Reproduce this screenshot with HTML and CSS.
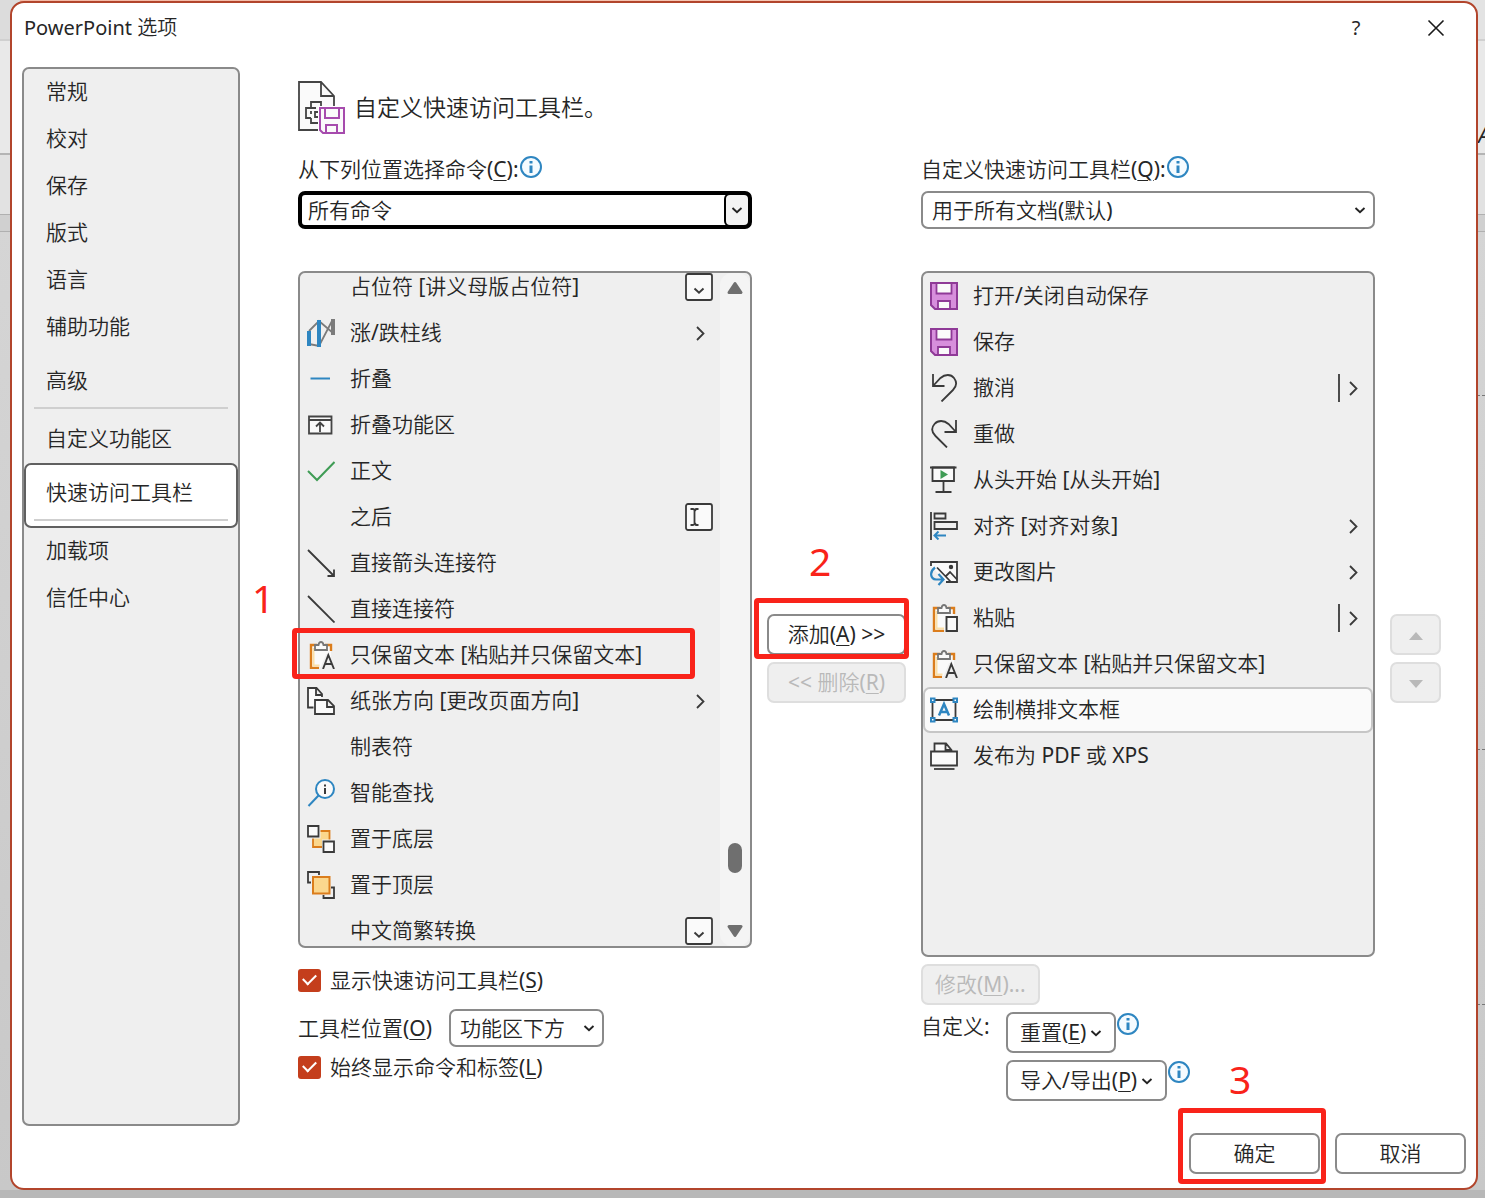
FILE: index.html
```html
<!DOCTYPE html>
<html lang="zh-CN">
<head>
    <meta charset="UTF-8">
    <meta name="viewport" content="width=device-width, initial-scale=1.0">
    <title>PowerPoint 选项</title>
    <link rel="stylesheet" href="styles.css">
</head>
<body>
    <!-- 公用图标 -->
    <svg class="hidden" xmlns="http://www.w3.org/2000/svg">
        <symbol id="i-info" viewBox="0 0 24 24">
            <circle cx="12" cy="12" r="10" fill="#f5fbff" stroke="#2e86c1" stroke-width="2"/>
            <path d="M12 10.500v7.500M12 6v2.600" stroke="#2e86c1" stroke-width="3" fill="none"/>
        </symbol>
        <symbol id="i-down" viewBox="0 0 12 12">
            <path d="M1.500 4l4.500 4.200L10.500 4" fill="none" stroke="#222" stroke-width="1.900"/>
        </symbol>
        <symbol id="i-right" viewBox="0 0 28 28">
            <path d="M12 8l6.500 6.500L12 21" fill="none" stroke="#3a3a3a" stroke-width="1.800"/>
        </symbol>
        <symbol id="i-split" viewBox="0 0 28 28">
            <path d="M12 8l6.500 6.500L12 21M1 0v28" fill="none" stroke="#3a3a3a" stroke-width="1.800"/>
        </symbol>
        <symbol id="i-drop" viewBox="0 0 28 28">
            <rect x="1" y="1" width="26" height="26" rx="2" fill="#fafafa" stroke="#3a3a3a" stroke-width="1.800"/>
            <path d="M9.500 15.500l4.500 4.300 4.500-4.300" fill="none" stroke="#3a3a3a" stroke-width="1.900"/>
        </symbol>
        <symbol id="i-save" viewBox="0 0 28 28">
            <path d="M1 1h26v26H5l-4-4z" fill="#d78fdc" stroke="#8f3a97" stroke-width="2"/>
            <path d="M6.500 1h15v10.500h-15zM8 27v-8h12v8z" fill="#fafafa" stroke="#8f3a97" stroke-width="1.800"/>
        </symbol>
        <symbol id="i-paste-text" viewBox="0 0 28 28">
            <path d="M4 4h20v22H4z" fill="#fafafa"/>
            <path d="M10 4H4v23h8M18 4h6v6" fill="none" stroke="#db7d1c" stroke-width="2.400"/>
            <path d="M6.500 7v17.500h6" fill="none" stroke="#fbe0a8" stroke-width="2"/>
            <path d="M13 28l6-15h3l6 15z" fill="#efefef"/>
            <path d="M8 9V4h3.500q.5-3 2.500-3t2.500 3H20v5z" fill="#fafafa" stroke="#777" stroke-width="1.800"/>
            <path d="M16 28l5.300-14 5.700 14M18 23h7.200" fill="none" stroke="#3a3a3a" stroke-width="1.900"/>
        </symbol>
    </svg>

    <!-- 后面的主窗口 -->
    <div class="backdrop">
        <div class="backdrop-title"></div>
        <div class="backdrop-tabs"><span>A</span></div>
        <div class="backdrop-ribbon"></div>
        <div class="backdrop-gap"></div>
        <div class="backdrop-canvas">
            <div class="guide"></div>
            <div class="guide"></div>
            <div class="guide"></div>
        </div>
    </div>

    <div class="dialog">
        <header class="titlebar">
            <h1>PowerPoint 选项</h1>
            <button type="button" class="title-button">?</button>
            <button type="button" class="title-button" aria-label="关闭">
                <svg width="18" height="18" viewBox="0 0 18 18"><path d="M1.500 1.500l15 15M16.500 1.500l-15 15" stroke="#1a1a1a" stroke-width="1.600"/></svg>
            </button>
        </header>

        <div class="dialog-body">
            <nav class="sidebar">
                <a href="#">常规</a>
                <a href="#">校对</a>
                <a href="#">保存</a>
                <a href="#">版式</a>
                <a href="#">语言</a>
                <a href="#">辅助功能</a>
                <a href="#" class="advanced">高级</a>
                <hr>
                <a href="#">自定义功能区</a>
                <div class="current">
                    <a href="#">快速访问工具栏</a>
                    <hr>
                </div>
                <a href="#">加载项</a>
                <a href="#">信任中心</a>
            </nav>

            <main class="content">
                <div class="heading">
                    <svg width="48" height="54" viewBox="0 0 48 54" fill="none">
                        <path d="M1 1h22l13 14v34H1z" fill="#fafafa"/>
                        <path d="M20 49H1V1h22l13 14v12M23 1v14h13" stroke="#444" stroke-width="1.800"/>
                        <path d="M13 27v-6h10v6M18 27H8v10h5M13 30v3M13 37v5h7M21 31h-4v5h3" stroke="#444" stroke-width="1.800"/>
                        <path d="M20 25h28v29H20z" fill="#fff"/>
                        <path d="M22 27h24v25H25l-3-3z" fill="#fafafa" stroke="#a64bad" stroke-width="2"/>
                        <path d="M27 27v10h14V27M28 52v-8h11v8" stroke="#a64bad" stroke-width="2"/>
                    </svg>
                    <h2>自定义快速访问工具栏。</h2>
                </div>

                <div class="columns">
                    <!-- 可选命令 -->
                    <section class="column">
                        <div class="label-row">
                            <label for="source">从下列位置选择命令(<u>C</u>):</label>
                            <svg class="info"><use href="#i-info"/></svg>
                        </div>
                        <div class="select focused">
                            <select id="source"><option>所有命令</option></select>
                            <span class="arrow"><svg><use href="#i-down"/></svg></span>
                        </div>
                        <div class="list source-list">
                            <ul>
                                <li><span class="icon"></span><span class="name">占位符 [讲义母版占位符]</span><svg class="icon"><use href="#i-drop"/></svg></li>
                                <li>
                                    <svg class="icon" viewBox="0 0 28 28" fill="none">
                                        <path d="M2 12L12 2l14 12M2 25l10 2L25 2" stroke="#7b7b7b" stroke-width="1.800"/>
                                        <path d="M2 12v15" stroke="#2e86c1" stroke-width="4"/>
                                        <path d="M12 1v27" stroke="#2e86c1" stroke-width="4"/>
                                        <path d="M26 0v16" stroke="#7b7b7b" stroke-width="4"/>
                                    </svg>
                                    <span class="name">涨/跌柱线</span><svg class="icon"><use href="#i-right"/></svg>
                                </li>
                                <li>
                                    <svg class="icon" viewBox="0 0 28 28"><path d="M3.500 13.500H23" stroke="#2e86c1" stroke-width="2"/></svg>
                                    <span class="name">折叠</span>
                                </li>
                                <li>
                                    <svg class="icon" viewBox="0 0 28 28" fill="none" stroke="#444" stroke-width="1.800">
                                        <path d="M2 5.500h22.500v17H2z" fill="#fafafa"/>
                                        <path d="M2 9h22.500M13 21v-9M9 15.500l4-4 4 4"/>
                                    </svg>
                                    <span class="name">折叠功能区</span>
                                </li>
                                <li>
                                    <svg class="icon" viewBox="0 0 28 28"><path d="M1 14l9 9L27.500 5" fill="none" stroke="#3f9c55" stroke-width="2"/></svg>
                                    <span class="name">正文</span>
                                </li>
                                <li>
                                    <span class="icon"></span><span class="name">之后</span>
                                    <svg class="icon" viewBox="0 0 28 28" fill="none" stroke="#3a3a3a" stroke-width="1.800">
                                        <rect x="1" y="1" width="26" height="26" rx="2" fill="#fafafa"/>
                                        <path d="M5.500 6H8q1.500 0 1.500 1.500T11 6h2.500M9.500 7v14M5.500 22H8q1.500 0 1.500-1.500T11 22h2.500"/>
                                    </svg>
                                </li>
                                <li>
                                    <svg class="icon" viewBox="0 0 28 28"><path d="M1 1l26 26M27 20.500V27h-6.500" fill="none" stroke="#3a3a3a" stroke-width="1.800"/></svg>
                                    <span class="name">直接箭头连接符</span>
                                </li>
                                <li>
                                    <svg class="icon" viewBox="0 0 28 28"><path d="M1 1l26.500 26.500" stroke="#3a3a3a" stroke-width="1.800"/></svg>
                                    <span class="name">直接连接符</span>
                                </li>
                                <li class="marked">
                                    <svg class="icon"><use href="#i-paste-text"/></svg>
                                    <span class="name">只保留文本 [粘贴并只保留文本]</span>
                                    <span class="mark mark-item"></span>
                                    <span class="step step-one">1</span>
                                </li>
                                <li>
                                    <svg class="icon" viewBox="0 0 28 28" fill="#fafafa" stroke="#3a3a3a" stroke-width="1.800">
                                        <path d="M6.500 20.500H1V1h8.500l5.500 6v3M9 1v7h6" />
                                        <path d="M8 13h13l6 6v8H8zM20 13v7h7"/>
                                    </svg>
                                    <span class="name">纸张方向 [更改页面方向]</span><svg class="icon"><use href="#i-right"/></svg>
                                </li>
                                <li><span class="icon"></span><span class="name">制表符</span></li>
                                <li>
                                    <svg class="icon" viewBox="0 0 28 28" fill="none">
                                        <circle cx="18" cy="10" r="9" fill="#fafafa" stroke="#2e86c1" stroke-width="2"/>
                                        <path d="M11.500 16.500L1.500 27" stroke="#2e86c1" stroke-width="2"/>
                                        <path d="M18 9v6M18 5.500v2" stroke="#3a3a3a" stroke-width="2"/>
                                    </svg>
                                    <span class="name">智能查找</span>
                                </li>
                                <li>
                                    <svg class="icon" viewBox="0 0 28 28" stroke-width="1.800">
                                        <path d="M6 6h16.500v16H6z" fill="#fbd78d" stroke="#db7d1c"/>
                                        <path d="M0 0h13.500v13.500H0zM15 14.500h13V28H15z" fill="#efefef"/>
                                        <path d="M1 1h10.500v10.500H1zM16.500 16.500H27V27H16.500z" fill="#fafafa" stroke="#3a3a3a"/>
                                    </svg>
                                    <span class="name">置于底层</span>
                                </li>
                                <li>
                                    <svg class="icon" viewBox="0 0 28 28" stroke-width="1.800" fill="none">
                                        <path d="M4 11.500H1V1h11v3M24 16.500h3V27H16.500v-3" stroke="#3a3a3a"/>
                                        <path d="M6 6h16.500v16.500H6z" fill="#fbd78d" stroke="#db7d1c" stroke-width="2"/>
                                    </svg>
                                    <span class="name">置于顶层</span>
                                </li>
                                <li><span class="icon"></span><span class="name">中文简繁转换</span><svg class="icon"><use href="#i-drop"/></svg></li>
                            </ul>
                            <div class="scrollbar">
                                <svg width="16" height="14" viewBox="0 0 16 14"><path d="M8 2.500l6 9H2z" fill="#6f6f6f" stroke="#6f6f6f" stroke-width="3" stroke-linejoin="round"/></svg>
                                <div class="track"><div class="thumb"></div></div>
                                <svg width="16" height="14" viewBox="0 0 16 14"><path d="M8 11.500l6-9H2z" fill="#6f6f6f" stroke="#6f6f6f" stroke-width="3" stroke-linejoin="round"/></svg>
                            </div>
                        </div>
                        <div class="source-options">
                            <label class="check"><input type="checkbox" checked><span>显示快速访问工具栏(<u>S</u>)</span></label>
                            <div class="position-row">
                                <label for="position">工具栏位置(<u>O</u>)</label>
                                <div class="select">
                                    <select id="position"><option>功能区下方</option></select>
                                    <span class="arrow"><svg><use href="#i-down"/></svg></span>
                                </div>
                            </div>
                            <label class="check"><input type="checkbox" checked><span>始终显示命令和标签(<u>L</u>)</span></label>
                        </div>
                    </section>

                    <!-- 添加 / 删除 -->
                    <div class="transfer">
                        <div class="marked">
                            <button type="button" class="button">添加(<u>A</u>) &gt;&gt;</button>
                            <span class="mark mark-add"></span>
                            <span class="step step-two">2</span>
                        </div>
                        <button type="button" class="button" disabled>&lt;&lt; 删除(<u>R</u>)</button>
                    </div>

                    <!-- 已选命令 -->
                    <section class="column">
                        <div class="label-row">
                            <label for="target">自定义快速访问工具栏(<u>Q</u>):</label>
                            <svg class="info"><use href="#i-info"/></svg>
                        </div>
                        <div class="select">
                            <select id="target"><option>用于所有文档(默认)</option></select>
                            <span class="arrow"><svg><use href="#i-down"/></svg></span>
                        </div>
                        <div class="list">
                            <ul>
                                <li><svg class="icon"><use href="#i-save"/></svg><span class="name">打开/关闭自动保存</span></li>
                                <li><svg class="icon"><use href="#i-save"/></svg><span class="name">保存</span></li>
                                <li>
                                    <svg class="icon" viewBox="0 0 28 28"><path d="M3 0v12h11.500M3 12l7.500-8C15 0 21 0 24 4s3 8-1 12L11.500 27.500" fill="none" stroke="#3a3a3a" stroke-width="1.800"/></svg>
                                    <span class="name">撤消</span><svg class="icon"><use href="#i-split"/></svg>
                                </li>
                                <li>
                                    <svg class="icon" viewBox="0 0 28 28"><path d="M26 0v12H14.500M26 12l-7.500-8C14 0 8 0 4.500 4s-3 8 1 12L17 27.500" fill="none" stroke="#3a3a3a" stroke-width="1.800"/></svg>
                                    <span class="name">重做</span>
                                </li>
                                <li>
                                    <svg class="icon" viewBox="0 0 28 28" fill="none" stroke="#3a3a3a" stroke-width="1.800">
                                        <path d="M2.500 1.500h21.500V15H2.500z" fill="#fafafa"/>
                                        <path d="M0 1.500h26.500M13.500 15v11M5.500 26h16"/>
                                        <path d="M10.500 4v9l7.500-4.500z" fill="#3f9c55" stroke="none"/>
                                    </svg>
                                    <span class="name">从头开始 [从头开始]</span>
                                </li>
                                <li>
                                    <svg class="icon" viewBox="0 0 28 28" fill="none" stroke="#3a3a3a" stroke-width="1.800">
                                        <path d="M1 0v28M4.500 1.500h11v5h-11zM4.500 10H27v7H4.500z"/>
                                        <path d="M16 23.500H5M8.500 19.500l-4 4 4 4" stroke="#2e86c1" stroke-width="2"/>
                                    </svg>
                                    <span class="name">对齐 [对齐对象]</span><svg class="icon"><use href="#i-right"/></svg>
                                </li>
                                <li>
                                    <svg class="icon" viewBox="0 0 28 28" fill="none" stroke="#3a3a3a" stroke-width="1.800">
                                        <path d="M1 8V4h26v20H16" fill="#fafafa"/>
                                        <path d="M7 9.500L20.500 23.500M16 18l4-4 7 7.500"/>
                                        <circle cx="21" cy="9" r="1.300" fill="#3a3a3a"/>
                                        <path d="M5 9.500C-1 14 .5 21 6 21.500h7M8.500 16l5 5.500-5 5.500" stroke="#2e86c1" stroke-width="2.200"/>
                                    </svg>
                                    <span class="name">更改图片</span><svg class="icon"><use href="#i-right"/></svg>
                                </li>
                                <li>
                                    <svg class="icon" viewBox="0 0 28 28" fill="none">
                                        <path d="M4 4h20v22H4z" fill="#fafafa"/>
                                        <path d="M10 4H4v23h10M18 4h6v6" stroke="#db7d1c" stroke-width="2.400"/>
                                        <path d="M6.500 7v17.500H14" stroke="#fbe0a8" stroke-width="2"/>
                                        <path d="M8 9V4h3.500q.5-3 2.500-3t2.500 3H20v5z" fill="#fafafa" stroke="#777" stroke-width="1.800"/>
                                        <path d="M16.500 13H27v14H16.500z" fill="#fafafa" stroke="#3a3a3a" stroke-width="1.900"/>
                                    </svg>
                                    <span class="name">粘贴</span><svg class="icon"><use href="#i-split"/></svg>
                                </li>
                                <li><svg class="icon"><use href="#i-paste-text"/></svg><span class="name">只保留文本 [粘贴并只保留文本]</span></li>
                                <li class="selected">
                                    <svg class="icon" viewBox="0 0 28 28" fill="none">
                                        <path d="M2.500 4h23v20h-23z" stroke="#3a3a3a" stroke-width="1.800"/>
                                        <path d="M1 2.500h3.500V6H1zM23.500 2.500H27V6h-3.500zM1 22h3.500v3.500H1zM23.500 22H27v3.500h-3.500z" fill="#fff" stroke="#2e86c1" stroke-width="2"/>
                                        <path d="M9 19.500L14 8l5 11.500M10.500 16h7" stroke="#2e86c1" stroke-width="2.500"/>
                                    </svg>
                                    <span class="name">绘制横排文本框</span>
                                </li>
                                <li>
                                    <svg class="icon" viewBox="0 0 28 28" fill="none" stroke="#3a3a3a" stroke-width="1.800">
                                        <path d="M4.500 9V1.500H16l5.500 6.500V9M15.500 1.500V8h6" fill="#fafafa"/>
                                        <path d="M1 9.500h26v14H1z" fill="#fafafa"/>
                                        <path d="M4 27h20.500"/>
                                    </svg>
                                    <span class="name">发布为 PDF 或 XPS</span>
                                </li>
                            </ul>
                        </div>
                        <div class="target-options">
                            <button type="button" class="button" disabled>修改(<u>M</u>)...</button>
                            <div class="customize">
                                <span>自定义:</span>
                                <div class="customize-buttons">
                                    <div class="with-info">
                                        <button type="button" class="button">重置(<u>E</u>)<svg class="caret"><use href="#i-down"/></svg></button>
                                        <svg class="info"><use href="#i-info"/></svg>
                                    </div>
                                    <div class="with-info">
                                        <button type="button" class="button">导入/导出(<u>P</u>)<svg class="caret"><use href="#i-down"/></svg></button>
                                        <svg class="info"><use href="#i-info"/></svg>
                                    </div>
                                </div>
                            </div>
                        </div>
                    </section>

                    <!-- 上移 / 下移 -->
                    <div class="transfer">
                        <button type="button" class="button" disabled aria-label="上移"><svg class="move" viewBox="0 0 14 8"><path d="M7 0l7 8H0z" fill="#b9b9b9"/></svg></button>
                        <button type="button" class="button" disabled aria-label="下移"><svg class="move" viewBox="0 0 14 8"><path d="M7 8l7-8H0z" fill="#b9b9b9"/></svg></button>
                    </div>
                </div>
            </main>
        </div>

        <footer class="footer">
            <div class="marked">
                <button type="button" class="button">确定</button>
                <span class="mark mark-ok"></span>
                <span class="step step-three">3</span>
            </div>
            <button type="button" class="button">取消</button>
        </footer>
    </div>
</body>
</html>
```
FILE: styles.css
```css
* {
    margin: 0;
    padding: 0;
    box-sizing: border-box;
}

body {
    font-family: "Noto Sans", "Noto Sans CJK SC DemiLight", "Noto Sans CJK SC", sans-serif;
    font-size: 21px;
    font-weight: 400;
    line-height: 28px;
    color: #262626;
    min-height: 100vh;
    padding: 1px 7px 8px 10px;
    display: flex;
    position: relative;
    background: #b8b8b8;
}

button,
select {
    font: inherit;
    color: inherit;
}

svg {
    flex: none;
}

u {
    text-underline-offset: 3px;
    text-decoration-thickness: 1px;
}

.hidden {
    display: none;
}

/* 主窗口背景 */
.backdrop {
    position: absolute;
    inset: 0 0 8px;
    overflow: hidden;
    background: linear-gradient(#d8d8d8, #c8c8c8);
}

.backdrop-title {
    height: 41px;
    background: linear-gradient(90deg, #dcdcdc 20px, #f3b9a5 20px, #f8d3c0 1460px, #e3e3e3 1460px);
    border-bottom: 2px solid #d0d0d0;
}

.backdrop-tabs {
    height: 114px;
    padding-top: 80px;
    margin-right: -5px;
    background: #e9e9e9;
    border-bottom: 2px solid #b4b4b4;
    text-align: right;
    font-style: italic;
}

.backdrop-ribbon {
    height: 60px;
    background: #e2e2e2;
    border-bottom: 1px solid #b0b0b0;
}

.backdrop-gap {
    height: 17px;
    background: #d0d0d0;
    border-bottom: 1px solid #b0b0b0;
}

.backdrop-canvas {
    padding-top: 163px;
}

.guide {
    height: 1px;
    margin-left: 50%;
    margin-bottom: 353px;
    border-top: 1px dashed #777;
}

.guide + .guide {
    margin-bottom: 254px;
}

/* 对话框 */
.dialog {
    position: relative;
    flex: 1;
    display: flex;
    flex-direction: column;
    background: #fff;
    border: 2px solid #b2452c;
    border-radius: 14px;
}

.titlebar {
    display: flex;
    align-items: center;
    height: 50px;
    padding-left: 12px;
}

.titlebar h1 {
    flex: 1;
    font-size: 20px;
    font-weight: 400;
}

.title-button {
    width: 80px;
    height: 50px;
    border: none;
    background: none;
    font-size: 20px;
    display: flex;
    align-items: center;
    justify-content: center;
}

.dialog-body {
    flex: 1;
    display: flex;
    margin-top: 14px;
    padding: 0 35px 0 10px;
}

.sidebar {
    width: 218px;
    flex: none;
    background: #efefef;
    border: 2px solid #8a8a8a;
    border-radius: 7px;
}

.sidebar a {
    display: block;
    height: 47px;
    line-height: 44px;
    padding-left: 22px;
    color: inherit;
    text-decoration: none;
}

.sidebar .advanced {
    margin-top: 7px;
}

.sidebar hr {
    height: 2px;
    border: none;
    background: #cfcfcf;
    margin: 2px 10px 7px;
}

.sidebar .current {
    height: 65px;
    padding-top: 5px;
    background: #fff;
    border: 2px solid #606060;
    border-radius: 7px;
}

.sidebar .current a {
    padding-left: 20px;
}

.sidebar .current hr {
    margin: 2px 8px 0;
}

.content {
    flex: 1;
    display: flex;
    flex-direction: column;
    padding: 14px 0 25px 58px;
}

.heading {
    display: flex;
    align-items: center;
    gap: 8px;
    height: 54px;
    margin-bottom: 20px;
}

.heading h2 {
    padding-bottom: 2px;
    font-size: 23px;
    font-weight: 400;
}

.columns {
    flex: 1;
    display: grid;
    grid-template-columns: minmax(0, 1fr) 139px minmax(0, 1fr) 51px;
    gap: 15px;
}

.column {
    display: flex;
    flex-direction: column;
}

.label-row {
    display: flex;
    height: 36px;
}

.info {
    width: 24px;
    height: 24px;
}

/* 下拉框 */
.select {
    position: relative;
    height: 38px;
}

.select select {
    appearance: none;
    width: 100%;
    height: 38px;
    padding: 0 9px;
    background: #fff;
    border: 2px solid #8a8a8a;
    border-radius: 7px;
    outline: none;
}

.select.focused select {
    padding: 0 6px;
    border: 4px solid #000;
}

.arrow {
    position: absolute;
    top: 2px;
    right: 2px;
    bottom: 2px;
    width: 26px;
    display: flex;
    align-items: center;
    justify-content: center;
    pointer-events: none;
}

.focused .arrow {
    background: #f3f3f3;
    border: 2px solid #000;
    border-radius: 6px;
}

.arrow svg,
.caret {
    width: 12px;
    height: 12px;
}

/* 命令列表 */
.list {
    flex: 1;
    display: flex;
    margin-top: 42px;
    background: #efefef;
    border: 2px solid #8a8a8a;
    border-radius: 7px;
}

.list ul {
    flex: 1;
    list-style: none;
}

.source-list ul {
    margin: -9px 0 -8px;
}

.list li {
    display: flex;
    align-items: center;
    gap: 15px;
    height: 46px;
    padding: 0 7px;
}

.list .selected {
    padding: 0 5px;
    background: #fafafa;
    border: 2px solid #c6c6c6;
    border-radius: 7px;
}

.icon {
    width: 28px;
    height: 28px;
    flex: none;
}

.name {
    flex: 1;
    padding-bottom: 2px;
    white-space: nowrap;
}

.scrollbar {
    width: 30px;
    display: flex;
    flex-direction: column;
    align-items: center;
    padding: 8px 0;
    background: #f4f4f4;
    border-radius: 12px;
}

.track {
    flex: 1;
    display: flex;
    align-items: flex-end;
    padding-bottom: 51px;
}

.thumb {
    width: 14px;
    height: 30px;
    border-radius: 7px;
    background: #6f6f6f;
}

/* 列表下方选项 */
.source-options {
    height: 153px;
    padding-top: 18px;
}

.check {
    display: flex;
    align-items: center;
    gap: 9px;
    height: 28px;
}

.check input {
    appearance: none;
    width: 23px;
    height: 23px;
    border-radius: 3px;
    background: #c43e1c;
    display: flex;
    align-items: center;
    justify-content: center;
}

.check input::after {
    content: "";
    width: 11px;
    height: 6px;
    margin-bottom: 4px;
    border-left: 2px solid #fff;
    border-bottom: 2px solid #fff;
    transform: rotate(-45deg);
}

.position-row {
    display: flex;
    align-items: center;
    gap: 17px;
    margin: 15px 0 6px;
}

.position-row .select {
    width: 155px;
}

.target-options {
    padding-top: 7px;
}

.customize {
    display: flex;
    margin-top: 7px;
}

.customize > span {
    width: 85px;
}

.customize-buttons {
    display: grid;
    gap: 7px;
}

.with-info {
    display: flex;
}

/* 按钮 */
.button {
    height: 41px;
    padding: 0 12px 2px;
    background: #fff;
    border: 2px solid #8a8a8a;
    border-radius: 7px;
    white-space: nowrap;
    vertical-align: top;
}

.button:disabled {
    color: #b9b9b9;
    background: #efefef;
    border-color: #dedede;
}

.caret {
    margin-left: 4px;
    vertical-align: 1px;
}

.move {
    width: 14px;
    height: 8px;
    vertical-align: middle;
}

.transfer {
    display: flex;
    flex-direction: column;
    justify-content: center;
    gap: 7px;
    padding-top: 60px;
}

.transfer .button {
    width: 100%;
    padding: 0;
}

.footer {
    display: flex;
    justify-content: flex-end;
    gap: 15px;
    padding: 7px 10px 14px;
}

.footer .button {
    width: 131px;
}

/* 红色步骤标注 */
.marked {
    position: relative;
}

.mark {
    position: absolute;
    border: 5px solid #f9231a;
    border-radius: 4px;
    pointer-events: none;
}

.mark-item {
    inset: -4px 25px -1px -8px;
}

.mark-add {
    inset: -16px -3px -4px -13px;
}

.mark-ok {
    inset: -25px -6px -10px -11px;
}

.step {
    position: absolute;
    color: #f9231a;
    font-size: 39px;
    line-height: 40px;
}

.step-one {
    top: -54px;
    left: -48px;
}

.step-two {
    top: -73px;
    left: 42px;
}

.step-three {
    top: -74px;
    left: 40px;
}
```
